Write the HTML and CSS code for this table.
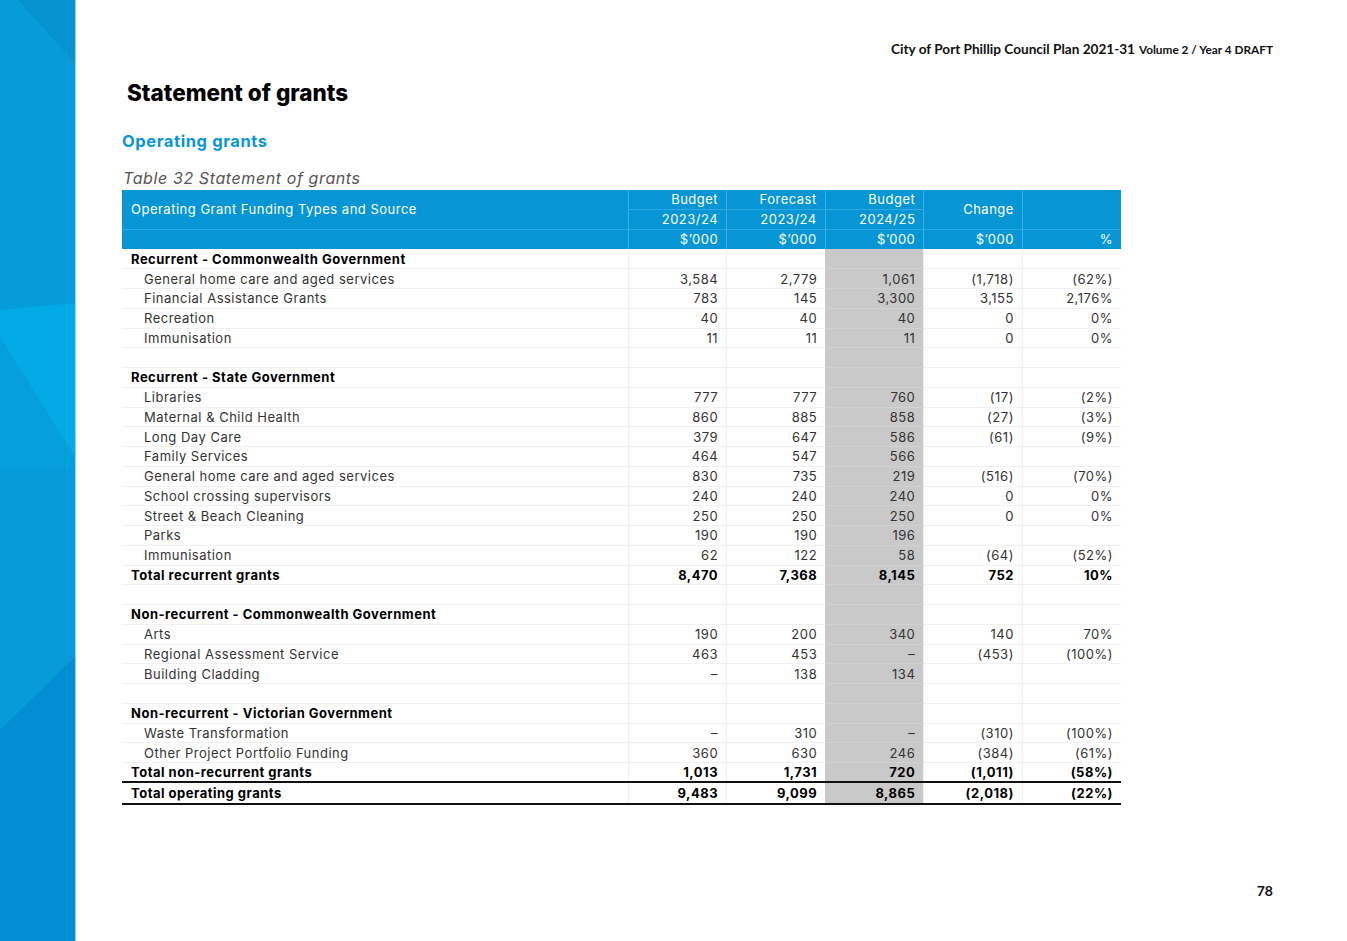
FILE: index.html
```html
<!DOCTYPE html>
<html lang="en">
<head>
<meta charset="utf-8">
<title>Statement of grants</title>
<link rel="stylesheet" href="styles.css">
</head>
<body>
<div class="page">
  <aside class="sidebar">
    <svg class="sidebar-art" viewBox="0 0 75 941" preserveAspectRatio="none" aria-hidden="true">
      <rect x="0" y="0" width="75" height="941" fill="#059cd9"/>
      <polygon points="18,0 75,0 75,63" fill="#0592cf"/>
      <polygon points="0,310 75,303 75,457 0,337" fill="#02abe6"/>
      <polygon points="0,337 75,457 75,470 0,470" fill="#049fdc"/>
      <polygon points="0,730 75,657 75,941 0,941" fill="#038dd3"/>
    </svg>
  </aside>
  <main class="content">
    <header class="running-head">
      <span class="rh-main">City of Port Phillip Council Plan 2021-31</span>
      <span class="rh-sub">Volume 2 / Year 4 DRAFT</span>
    </header>
    <h1 class="title">Statement of grants</h1>
    <h2 class="subtitle">Operating grants</h2>
    <p class="caption">Table 32 Statement of grants</p>
    <table class="grants">
      <colgroup>
        <col class="c-label">
        <col class="c-num">
        <col class="c-num">
        <col class="c-num">
        <col class="c-num">
        <col class="c-num">
      </colgroup>
      <thead>
        <tr class="h1">
          <th class="h-label" rowspan="2">Operating Grant Funding Types and Source</th>
          <th class="h-num h-top">Budget</th>
          <th class="h-num h-top">Forecast</th>
          <th class="h-num h-top">Budget</th>
          <th class="h-num" rowspan="2">Change</th>
          <th class="h-num" rowspan="2"></th>
        </tr>
        <tr class="h2">
          <th class="h-num">2023/24</th>
          <th class="h-num">2023/24</th>
          <th class="h-num">2024/25</th>
        </tr>
        <tr class="h3">
          <th class="h-label"></th>
          <th class="h-num">$’000</th>
          <th class="h-num">$’000</th>
          <th class="h-num">$’000</th>
          <th class="h-num">$’000</th>
          <th class="h-num">%</th>
        </tr>
      </thead>
      <tbody>
        <tr class="sec"><td>Recurrent - Commonwealth Government</td><td></td><td></td><td class="hl"></td><td></td><td></td></tr>
        <tr><td>General home care and aged services</td><td>3,584</td><td>2,779</td><td class="hl">1,061</td><td>(1,718)</td><td>(62%)</td></tr>
        <tr><td>Financial Assistance Grants</td><td>783</td><td>145</td><td class="hl">3,300</td><td>3,155</td><td>2,176%</td></tr>
        <tr><td>Recreation</td><td>40</td><td>40</td><td class="hl">40</td><td>0</td><td>0%</td></tr>
        <tr><td>Immunisation</td><td>11</td><td>11</td><td class="hl">11</td><td>0</td><td>0%</td></tr>
        <tr class="blank"><td></td><td></td><td></td><td class="hl"></td><td></td><td></td></tr>
        <tr class="sec"><td>Recurrent - State Government</td><td></td><td></td><td class="hl"></td><td></td><td></td></tr>
        <tr><td>Libraries</td><td>777</td><td>777</td><td class="hl">760</td><td>(17)</td><td>(2%)</td></tr>
        <tr><td>Maternal &amp; Child Health</td><td>860</td><td>885</td><td class="hl">858</td><td>(27)</td><td>(3%)</td></tr>
        <tr><td>Long Day Care</td><td>379</td><td>647</td><td class="hl">586</td><td>(61)</td><td>(9%)</td></tr>
        <tr><td>Family Services</td><td>464</td><td>547</td><td class="hl">566</td><td></td><td></td></tr>
        <tr><td>General home care and aged services</td><td>830</td><td>735</td><td class="hl">219</td><td>(516)</td><td>(70%)</td></tr>
        <tr><td>School crossing supervisors</td><td>240</td><td>240</td><td class="hl">240</td><td>0</td><td>0%</td></tr>
        <tr><td>Street &amp; Beach Cleaning</td><td>250</td><td>250</td><td class="hl">250</td><td>0</td><td>0%</td></tr>
        <tr><td>Parks</td><td>190</td><td>190</td><td class="hl">196</td><td></td><td></td></tr>
        <tr><td>Immunisation</td><td>62</td><td>122</td><td class="hl">58</td><td>(64)</td><td>(52%)</td></tr>
        <tr class="total"><td>Total recurrent grants</td><td>8,470</td><td>7,368</td><td class="hl">8,145</td><td>752</td><td>10%</td></tr>
        <tr class="blank"><td></td><td></td><td></td><td class="hl"></td><td></td><td></td></tr>
        <tr class="sec"><td>Non-recurrent - Commonwealth Government</td><td></td><td></td><td class="hl"></td><td></td><td></td></tr>
        <tr><td>Arts</td><td>190</td><td>200</td><td class="hl">340</td><td>140</td><td>70%</td></tr>
        <tr><td>Regional Assessment Service</td><td>463</td><td>453</td><td class="hl">–</td><td>(453)</td><td>(100%)</td></tr>
        <tr><td>Building Cladding</td><td>–</td><td>138</td><td class="hl">134</td><td></td><td></td></tr>
        <tr class="blank"><td></td><td></td><td></td><td class="hl"></td><td></td><td></td></tr>
        <tr class="sec"><td>Non-recurrent - Victorian Government</td><td></td><td></td><td class="hl"></td><td></td><td></td></tr>
        <tr><td>Waste Transformation</td><td>–</td><td>310</td><td class="hl">–</td><td>(310)</td><td>(100%)</td></tr>
        <tr><td>Other Project Portfolio Funding</td><td>360</td><td>630</td><td class="hl">246</td><td>(384)</td><td>(61%)</td></tr>
        <tr class="total rule"><td>Total non-recurrent grants</td><td>1,013</td><td>1,731</td><td class="hl">720</td><td>(1,011)</td><td>(58%)</td></tr>
        <tr class="total rule grand"><td>Total operating grants</td><td>9,483</td><td>9,099</td><td class="hl">8,865</td><td>(2,018)</td><td>(22%)</td></tr>
      </tbody>
    </table>
    <footer class="page-foot">78</footer>
  </main>
</div>
</body>
</html>
```
FILE: styles.css
```css
* { box-sizing: border-box; }
html, body { margin: 0; padding: 0; background: #ffffff; }
body { font-family: "Inter", "Noto Sans", sans-serif; color: #333; }

.page {
  display: flex;
  width: 1347px;
  min-height: 941px;
}

.sidebar {
  flex: 0 0 76px;
  height: 941px;
  border-right: 1px solid #9ad6f3;
  background: #059cd9;
}
.sidebar-art { display: block; width: 75px; height: 941px; }

.content {
  flex: 1;
  display: flex;
  flex-direction: column;
  padding: 0 74px 0 46px;
}

.running-head {
  margin-top: 40px;
  text-align: right;
  font-family: "Lato", "Liberation Sans", sans-serif;
  font-weight: 700;
  color: #111;
  line-height: 16px;
  height: 16px;
}
.rh-main { font-size: 13.6px; }
.rh-sub { font-size: 11.8px; }

.title {
  margin: 23px 0 0 5px;
  font-size: 22.5px;
  line-height: 28px;
  font-weight: 800;
  letter-spacing: 0px;
  color: #000;
}

.subtitle {
  margin: 24px 0 0 0;
  font-size: 16.5px;
  line-height: 20px;
  font-weight: 700;
  color: #0a95d6;
  letter-spacing: 0.6px;
}

.caption {
  margin: 17px 0 0 1px;
  font-size: 16px;
  line-height: 20px;
  font-style: italic;
  color: #555;
  letter-spacing: 0.6px;
}

.grants {
  margin-top: 2px;
  width: 999px;
  border-collapse: collapse;
  table-layout: fixed;
  font-size: 13px;
  letter-spacing: 0.5px;
}
.c-label { width: 506px; }
.c-num { width: 98.6px; }

.grants th {
  background: #0696d6;
  color: #fff;
  font-weight: 400;
  padding: 0 8px;
  height: 19.4px;
  line-height: 19px;
  border-left: 1px solid #3fb0e6;
  white-space: nowrap;
}
.grants th.h-label {
  text-align: left;
  border-left: none;
  padding-left: 9px;
}
.grants th.h-num { text-align: right; }
.grants th.h-top { border-bottom: 1px solid #2fa8e2; }
.grants tr.h3 th { border-top: 1px solid #2fa8e2; }

.grants tbody tr { height: 19.75px; }
.grants tbody tr.grand { height: 21.5px; }
.grants td {
  padding: 0 8px 0 0;
  line-height: 18px;
  text-align: right;
  color: #333;
  border-bottom: 1px solid #f1f1f1;
  border-left: 1px solid #f1f1f1;
  white-space: nowrap;
}
.grants td:first-child {
  text-align: left;
  padding-left: 22px;
  border-left: none;
}
.grants td.hl {
  background: #c9c9c9;
  border-bottom-color: #d2d2d2;
  border-left: none;
}
.grants tr.sec td:first-child { padding-left: 9px; }
.grants tr.sec td,
.grants tr.total td {
  font-weight: 700;
  color: #000;
}
.grants tr.total td:first-child { padding-left: 9px; }
.grants tr.rule td { border-bottom: 2px solid #111; }

.page-foot {
  margin-top: auto;
  padding-bottom: 41px;
  text-align: right;
  font-family: "Lato", "Liberation Sans", sans-serif;
  font-weight: 700;
  font-size: 14px;
  line-height: 18px;
  color: #111;
}
```
